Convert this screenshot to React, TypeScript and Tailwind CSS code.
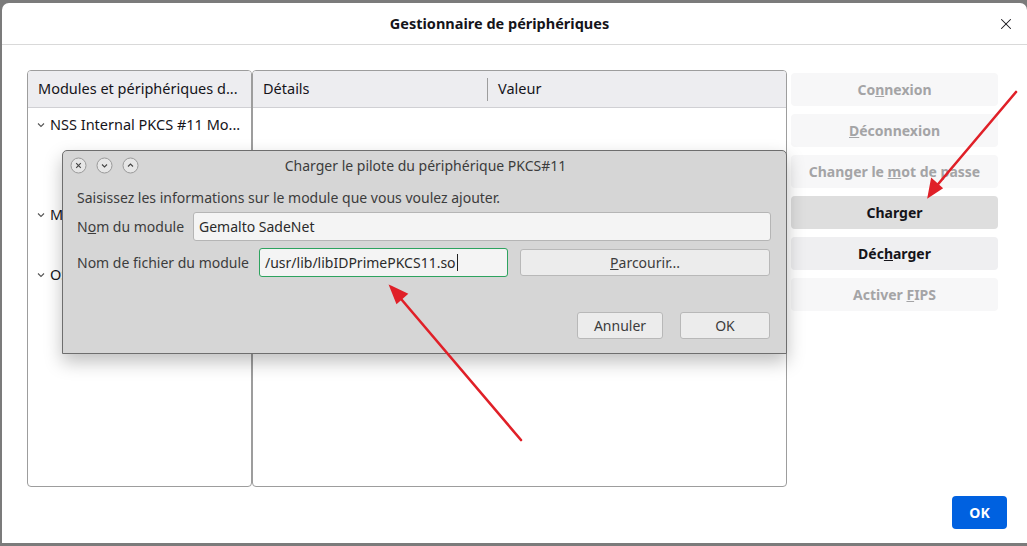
import { X } from 'lucide-react'

const font = { fontFamily: '"Noto Sans", "Open Sans", sans-serif' }

function SideButton({ children, enabled, active }: { children: React.ReactNode; enabled?: boolean; active?: boolean }) {
    const tone = active
        ? 'bg-[#dedede] text-[#15141a]'
        : enabled
        ? 'bg-[#efeff1] text-[#15141a]'
        : 'bg-[#f7f7f8] text-[#a4a4a6]'
    return (
        <div className={`h-[33px] rounded-[4px] flex items-center justify-center text-[14px] font-bold ${tone}`}>
            <span>{children}</span>
        </div>
    )
}

function TreeRow({ label, child }: { label: string; child?: boolean }) {
    return (
        <div className={`h-[30px] flex items-center gap-[4px] text-[14.5px] text-[#15141a] whitespace-nowrap overflow-hidden ${child ? 'pl-[60px]' : 'pl-[8px]'}`}>
            {!child && (
                <svg width="10" height="10" viewBox="0 0 10 10" className="shrink-0">
                    <path d="M2 3.5 L5 6.5 L8 3.5" fill="none" stroke="#555" strokeWidth="1.1" />
                </svg>
            )}
            <span className="truncate">{label}</span>
        </div>
    )
}

function Circle({ glyph }: { glyph: 'x' | 'down' | 'up' }) {
    return (
        <svg width="17" height="17" viewBox="0 0 17 17">
            <circle cx="8.5" cy="8.5" r="7.5" fill="#e6e6e6" stroke="#9a9a9a" strokeWidth="1" />
            {glyph === 'x' && <path d="M6.2 6.2 L10.8 10.8 M10.8 6.2 L6.2 10.8" stroke="#444" strokeWidth="1.1" />}
            {glyph === 'down' && <path d="M6 7.5 L8.5 10 L11 7.5" fill="none" stroke="#444" strokeWidth="1.1" />}
            {glyph === 'up' && <path d="M6 9.5 L8.5 7 L11 9.5" fill="none" stroke="#444" strokeWidth="1.1" />}
        </svg>
    )
}

function PkcsDialog() {
    return (
        <div
            className="absolute left-[62px] top-[150px] w-[725px] h-[204px] bg-[#d6d6d6] border border-[#6e6e6e] rounded-t-[5px] shadow-[0_8px_18px_rgba(0,0,0,0.25)] flex flex-col text-[#3c3c3c]"
            style={font}
        >
            <div className="h-[29px] grid grid-cols-[1fr_auto_1fr] items-center px-[4px]">
                <div className="flex items-center gap-[9px] pl-[3px]">
                    <Circle glyph="x" />
                    <Circle glyph="down" />
                    <Circle glyph="up" />
                </div>
                <span className="text-[14px] text-[#3c3c3c] pl-[2px]">Charger le pilote du périphérique PKCS#11</span>
                <span />
            </div>
            <div className="flex flex-col px-[14px] pt-[6px] text-[14px]">
                <div className="h-[22px] flex items-center">Saisissez les informations sur le module que vous voulez ajouter.</div>
                <div className="flex items-center mt-[4px] gap-[8px]">
                    <span className="w-[108px]">N<u>o</u>m du module</span>
                    <div className="flex-1 mr-[1px] h-[29px] bg-[#f4f4f4] border border-[#b5b5b5] rounded-[3px] flex items-center px-[5px] text-[#2b2b2b]">
                        Gemalto SadeNet
                    </div>
                </div>
                <div className="flex items-center mt-[7px] gap-[9px]">
                    <span className="w-[173px] whitespace-nowrap">Nom de f<u>i</u>chier du module</span>
                    <div className="w-[249px] h-[29px] bg-[#f4f4f4] border border-[#2ea35f] rounded-[3px] flex items-center px-[5px] text-[#2b2b2b]">
                        /usr/lib/libIDPrimePKCS11.so<span className="w-px h-[17px] bg-[#222] ml-px" />
                    </div>
                    <div className="ml-[3px] w-[250px] h-[27px] bg-[#ececec] border border-[#b8b8b8] rounded-[3px] flex items-center justify-center">
                        <span><u>P</u>arcourir...</span>
                    </div>
                </div>
                <div className="flex justify-end gap-[17px] mt-[35px] mr-[2px]">
                    <div className="w-[86px] h-[27px] bg-[#ececec] border border-[#b8b8b8] rounded-[3px] flex items-center justify-center">Annuler</div>
                    <div className="w-[90px] h-[27px] bg-[#ececec] border border-[#b8b8b8] rounded-[3px] flex items-center justify-center">OK</div>
                </div>
            </div>
        </div>
    )
}

export default function App() {
    return (
        <div className="relative w-[1027px] h-[546px] overflow-hidden bg-[#7b7b7b] pt-[3px] pl-[2px]" style={font}>
            <div className="h-[540px] bg-white rounded-t-[7px] flex flex-col">
                <header className="h-[42px] shrink-0 border-b border-[#d9d9d9] grid grid-cols-[1fr_auto_1fr] items-center">
                    <span />
                    <span className="text-[14.5px] font-bold text-[#15141a] -translate-x-[15px]">Gestionnaire de périphériques</span>
                    <div className="flex justify-end pr-[12px]">
                        <X size={18} strokeWidth={1.4} className="text-[#15141a]" />
                    </div>
                </header>

                <div className="flex-1 flex flex-col px-[25px] pt-[25px]">
                    <div className="flex">
                        <div className="w-[225px] h-[417px] border border-[#9d9d9d] rounded-[4px] overflow-hidden flex flex-col">
                            <div className="h-[37px] bg-[#ededf0] border-b border-[#d0d0d4] flex items-center px-[10px] text-[14.5px] text-[#15141a] whitespace-nowrap">
                                Modules et périphériques d...
                            </div>
                            <div className="pt-[2px]">
                                <TreeRow label="NSS Internal PKCS #11 Mo..." />
                                <div className="h-[30px] pt-[6px] pl-[60px] text-[14.5px] text-[#15141a] whitespace-nowrap overflow-hidden">Services de crypto...</div>
                                <div className="h-[30px]" />
                                <TreeRow label="Module de racines..." />
                                <div className="h-[30px]" />
                                <TreeRow label="OS Client Cert Module" />
                            </div>
                        </div>

                        <div className="w-[535px] h-[417px] border border-[#9d9d9d] rounded-[4px] overflow-hidden">
                            <div className="h-[37px] bg-[#ededf0] border-b border-[#d0d0d4] flex items-center text-[14.5px] text-[#15141a]">
                                <span className="w-[234px] pl-[10px]">Détails</span>
                                <span className="w-px h-[23px] bg-[#9d9d9d]" />
                                <span className="pl-[10px]">Valeur</span>
                            </div>
                        </div>

                        <div className="w-[207px] ml-[4px] pt-[3px] flex flex-col gap-[8px]">
                            <SideButton>Co<u>n</u>nexion</SideButton>
                            <SideButton><u>D</u>éconnexion</SideButton>
                            <SideButton>Changer le <u>m</u>ot de passe</SideButton>
                            <SideButton active>Charger</SideButton>
                            <SideButton enabled>Déc<u>h</u>arger</SideButton>
                            <SideButton>Activer <u>F</u>IPS</SideButton>
                        </div>
                    </div>

                    <div className="flex justify-end mt-[9px]">
                        <div className="w-[55px] h-[33px] mr-[-5px] bg-[#0061e0] rounded-[4px] flex items-center justify-center text-white text-[14px] font-bold">
                            OK
                        </div>
                    </div>
                </div>
            </div>

            <PkcsDialog />

            <svg className="absolute inset-0 pointer-events-none" width="1027" height="546" viewBox="0 0 1027 546">
                <g stroke="#e02028" strokeWidth="2.6" fill="#e02028" strokeLinecap="round">
                    <line x1="1016" y1="92" x2="934" y2="189" />
                    <polygon points="929,196 932,180 941,188" />
                    <line x1="521" y1="440" x2="396" y2="293" />
                    <polygon points="391,287 406,294 397,302" />
                </g>
            </svg>
        </div>
    )
}
